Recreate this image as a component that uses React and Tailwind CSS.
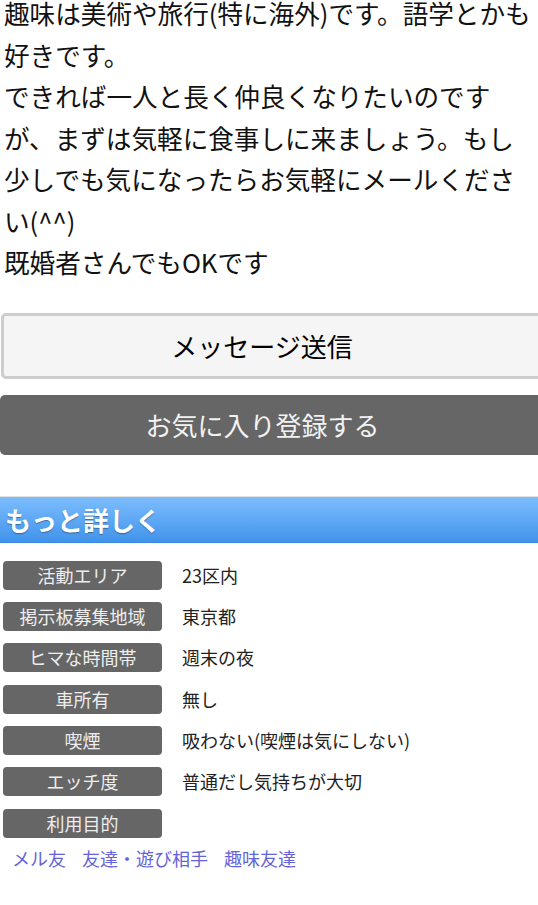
const details = [
  { label: "活動エリア", value: "23区内" },
  { label: "掲示板募集地域", value: "東京都" },
  { label: "ヒマな時間帯", value: "週末の夜" },
  { label: "車所有", value: "無し" },
  { label: "喫煙", value: "吸わない(喫煙は気にしない)" },
  { label: "エッチ度", value: "普通だし気持ちが大切" },
  { label: "利用目的", value: "" },
];

const purposes = ["メル友", "友達・遊び相手", "趣味友達"];

export default function App() {
  return (
    <div
      className="w-full min-h-[905px] overflow-hidden bg-white"
      style={{ fontFamily: '"Noto Sans CJK JP", "Noto Sans", sans-serif' }}
    >
      {/* profile message */}
      <p className="-mt-[8px] pl-[4px] text-[25.6px] leading-[41.5px] text-[#111]">
        趣味は美術や旅行(特に海外)です。語学とかも好きです。
        <br />
        できれば一人と長く仲良くなりたいのですが、まずは気軽に食事しに来ましょう。もし少しでも気になったらお気軽にメールください(^^)
        <br />
        既婚者さんでもOKです
      </p>

      {/* buttons */}
      <button className="mt-[30px] ml-[1px] flex h-[66px] w-[544px] items-center justify-center rounded-[5px] border-[3px] border-[#cdcdcd] bg-[#f5f5f5] pr-[22px] text-[26px] text-black">
        メッセージ送信
      </button>
      <button className="mt-[16px] flex h-[60px] w-[545px] items-center justify-center rounded-[5px] bg-[#666666] pr-[20px] text-[26px] text-[#f2f2f2]">
        お気に入り登録する
      </button>

      {/* section header */}
      <div className="mt-[41px] border-t border-[#e2e2e2]">
        <h2 className="flex h-[46px] items-center border-b border-[#3a8ae0] bg-gradient-to-b from-[#7dbdfe] to-[#3f93eb] pl-[5px] text-[26px] font-bold text-white [text-shadow:0_1px_1px_rgba(0,0,0,0.35)]">
          もっと詳しく
        </h2>
      </div>

      {/* detail rows */}
      <div className="mt-[18px] flex flex-col gap-[12.4px] pl-[3px]">
        {details.map((d) => (
          <div key={d.label} className="flex items-center gap-[20px]">
            <span className="flex h-[29px] w-[159px] items-center justify-center rounded-[4px] bg-[#666666] text-[18px] text-[#eeeeee]">
              {d.label}
            </span>
            <span className="text-[18px] text-[#222]">{d.value}</span>
          </div>
        ))}
      </div>

      <div className="mt-[8px] flex gap-[16px] pl-[12px] text-[18px] leading-[24px] text-[#6464d8]">
        {purposes.map((p) => (
          <a key={p} href="#">
            {p}
          </a>
        ))}
      </div>
    </div>
  );
}
